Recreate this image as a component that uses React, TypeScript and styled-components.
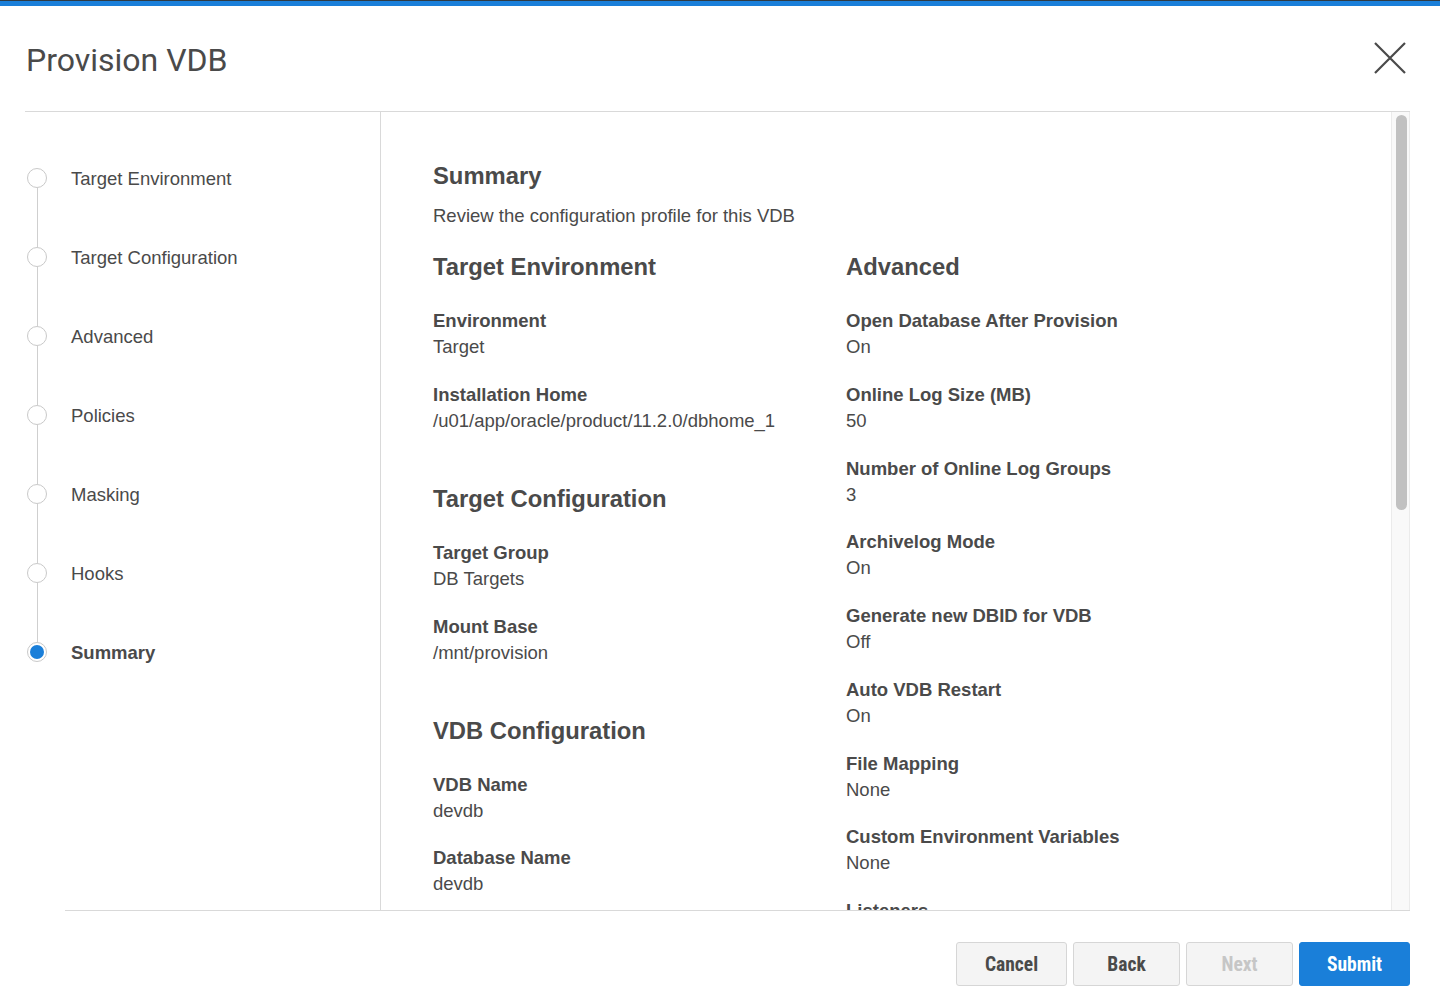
import React from "react";
import styled, { createGlobalStyle } from "styled-components";

const Global = createGlobalStyle`
  html, body { margin: 0; padding: 0; background: #ffffff; }
  body { font-family: "Liberation Sans", Arial, sans-serif; color: #4a4a4a; }
  * { box-sizing: border-box; }
`;

const Page = styled.div`
  width: 1440px;
  height: 1001px;
  display: flex;
  flex-direction: column;
  overflow: hidden;
  background: #fff;
`;

const TopBar = styled.div`
  height: 6px;
  background: #1a7fd9;
  border-top: 1px solid #2f3b45;
`;

const Header = styled.header`
  height: 105px;
  display: flex;
  align-items: center;
  justify-content: space-between;
  padding: 2px 34px 0 26px;
`;

const Title = styled.h1`
  margin: 0;
  font-family: Roboto, "Liberation Sans", sans-serif;
  font-weight: 400;
  font-size: 32px;
  color: #4a4a4a;
`;

const CloseButton = styled.button`
  width: 32px;
  height: 32px;
  margin-top: -3px;
  padding: 0;
  border: 0;
  background: transparent;
  display: flex;
  cursor: pointer;
`;

const Body = styled.div`
  margin: 0 30px 0 25px;
  height: 799px;
  border-top: 1px solid #d9d9d9;
  display: flex;
`;

const Sidebar = styled.nav`
  width: 356px;
  flex: none;
  border-right: 1px solid #d9d9d9;
  padding: 56px 0 0 2px;
  display: flex;
  flex-direction: column;
`;

const Step = styled.div`
  display: flex;
  flex-direction: column;
`;

const StepRow = styled.div`
  display: flex;
  align-items: center;
  gap: 24px;
  height: 20px;
`;

const Dot = styled.span<{ $active?: boolean }>`
  width: 20px;
  height: 20px;
  flex: none;
  border-radius: 50%;
  border: 1px solid #c9c9c9;
  background: #fff;
  display: flex;
  align-items: center;
  justify-content: center;
  &::before {
    content: "";
    width: 14px;
    height: 14px;
    border-radius: 50%;
    background: ${(p) => (p.$active ? "#1a7fd9" : "transparent")};
  }
`;

const StepLabel = styled.span<{ $active?: boolean }>`
  font-size: 18.5px;
  line-height: 20px;
  padding-top: 2px;
  font-weight: ${(p) => (p.$active ? 700 : 400)};
  color: #4a4a4a;
`;

const Connector = styled.div`
  width: 1px;
  height: 59px;
  margin-left: 9.5px;
  background: #cfcfcf;
`;

const ContentPanel = styled.section`
  flex: 1;
  display: flex;
  min-width: 0;
`;

const ScrollArea = styled.div`
  flex: 1;
  overflow: hidden;
  padding: 49px 0 94px 52px;
`;

const Track = styled.div`
  width: 19px;
  flex: none;
  background: #f9f9f9;
  border-left: 1px solid #ebebeb;
  border-right: 1px solid #ebebeb;
  display: flex;
  flex-direction: column;
`;

const Thumb = styled.div`
  width: 11px;
  height: 395px;
  margin: 3px 0 0 4px;
  border-radius: 6px;
  background: #c1c1c1;
`;

const PageHeading = styled.h2`
  margin: 0;
  font-size: 23.8px;
  line-height: 30px;
  font-weight: 700;
  color: #4a4a4a;
`;

const Description = styled.p`
  margin: 12px 0 0;
  font-size: 18.5px;
  line-height: 26px;
  color: #4a4a4a;
`;

const Columns = styled.div`
  margin-top: 23px;
  display: grid;
  grid-template-columns: 413px 1fr;
  align-items: start;
`;

const Column = styled.div`
  display: flex;
  flex-direction: column;
  gap: 50px;
`;

const Section = styled.div`
  display: flex;
  flex-direction: column;
`;

const SectionTitle = styled.h3`
  margin: 0 0 26px;
  font-size: 23.8px;
  line-height: 30px;
  font-weight: 700;
  color: #4a4a4a;
`;

const FieldList = styled.dl`
  margin: 0;
  display: flex;
  flex-direction: column;
  gap: 21.75px;
`;

const Field = styled.div`
  display: flex;
  flex-direction: column;
`;

const Label = styled.dt`
  font-size: 18.5px;
  line-height: 26px;
  font-weight: 700;
  color: #4a4a4a;
`;

const Value = styled.dd`
  margin: 0;
  font-size: 18.5px;
  line-height: 26px;
  color: #4a4a4a;
`;

const Footer = styled.footer`
  margin: 0 30px 0 65px;
  border-top: 1px solid #d9d9d9;
  padding-top: 31px;
  display: flex;
  justify-content: flex-end;
  gap: 6px;
`;

const Button = styled.button<{ $w: number; $primary?: boolean; $disabled?: boolean }>`
  width: ${(p) => p.$w}px;
  height: 44px;
  border-radius: 3px;
  border: 1px solid ${(p) => (p.$primary ? "#1a7fd9" : "#d6d6d6")};
  background: ${(p) => (p.$primary ? "#1a7fd9" : "#f4f4f4")};
  color: ${(p) => (p.$primary ? "#ffffff" : p.$disabled ? "#c6c6c6" : "#4a4a4a")};
  font-family: "Roboto Condensed", "Liberation Sans Narrow", Roboto, sans-serif;
  font-weight: 700;
  font-size: 19.5px;
  letter-spacing: 0;
  padding: 0;
  cursor: ${(p) => (p.$disabled ? "default" : "pointer")};
`;

type F = [string, string];
type S = { title: string; fields: F[] };

const steps = [
  "Target Environment",
  "Target Configuration",
  "Advanced",
  "Policies",
  "Masking",
  "Hooks",
  "Summary",
];

const leftSections: S[] = [
  {
    title: "Target Environment",
    fields: [
      ["Environment", "Target"],
      ["Installation Home", "/u01/app/oracle/product/11.2.0/dbhome_1"],
    ],
  },
  {
    title: "Target Configuration",
    fields: [
      ["Target Group", "DB Targets"],
      ["Mount Base", "/mnt/provision"],
    ],
  },
  {
    title: "VDB Configuration",
    fields: [
      ["VDB Name", "devdb"],
      ["Database Name", "devdb"],
      ["Unique Database Name", "devdb"],
      ["Instance Name", "devdb"],
    ],
  },
  {
    title: "Policies",
    fields: [
      ["Snapshot Policy", "Default Snapshot"],
      ["Retention Policy", "Default Retention"],
    ],
  },
  { title: "Masking", fields: [["Masking Job", "None"]] },
  { title: "Hooks", fields: [["Configure Clone", "None"]] },
];

const rightSections: S[] = [
  {
    title: "Advanced",
    fields: [
      ["Open Database After Provision", "On"],
      ["Online Log Size (MB)", "50"],
      ["Number of Online Log Groups", "3"],
      ["Archivelog Mode", "On"],
      ["Generate new DBID for VDB", "Off"],
      ["Auto VDB Restart", "On"],
      ["File Mapping", "None"],
      ["Custom Environment Variables", "None"],
      ["Listeners", "LISTENER"],
    ],
  },
];

const renderSections = (sections: S[]) =>
  sections.map((s) => (
    <Section key={s.title}>
      <SectionTitle>{s.title}</SectionTitle>
      <FieldList>
        {s.fields.map(([l, v]) => (
          <Field key={l}>
            <Label>{l}</Label>
            <Value>{v}</Value>
          </Field>
        ))}
      </FieldList>
    </Section>
  ));

export default function App() {
  return (
    <Page>
      <Global />
      <TopBar />
      <Header>
        <Title>Provision VDB</Title>
        <CloseButton aria-label="Close">
          <svg width="32" height="32" viewBox="0 0 32 32">
            <path d="M1 1 L31 31 M31 1 L1 31" stroke="#4a4a4a" strokeWidth="2.2" fill="none" />
          </svg>
        </CloseButton>
      </Header>
      <Body>
        <Sidebar>
          {steps.map((s, i) => {
            const active = i === steps.length - 1;
            return (
              <Step key={s}>
                <StepRow>
                  <Dot $active={active} />
                  <StepLabel $active={active}>{s}</StepLabel>
                </StepRow>
                {i < steps.length - 1 && <Connector />}
              </Step>
            );
          })}
        </Sidebar>
        <ContentPanel>
          <ScrollArea>
            <PageHeading>Summary</PageHeading>
            <Description>Review the configuration profile for this VDB</Description>
            <Columns>
              <Column>{renderSections(leftSections)}</Column>
              <Column>{renderSections(rightSections)}</Column>
            </Columns>
          </ScrollArea>
          <Track>
            <Thumb />
          </Track>
        </ContentPanel>
      </Body>
      <Footer>
        <Button $w={111}>Cancel</Button>
        <Button $w={107}>Back</Button>
        <Button $w={107} $disabled disabled>
          Next
        </Button>
        <Button $w={111} $primary>
          Submit
        </Button>
      </Footer>
    </Page>
  );
}
